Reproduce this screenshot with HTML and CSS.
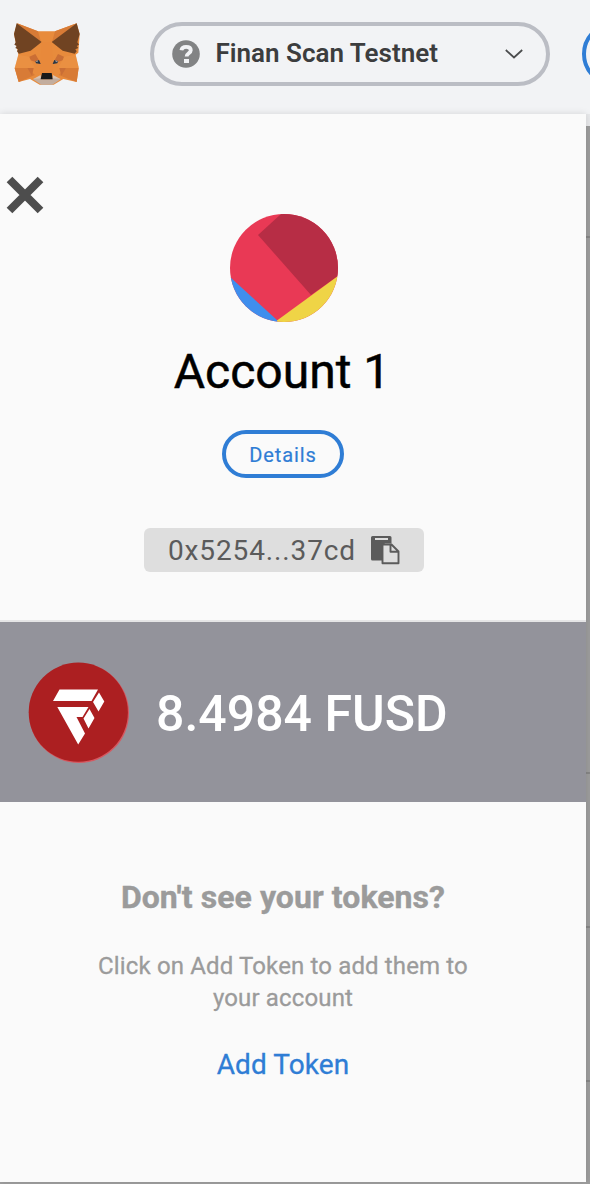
FILE: index.html
```html
<!DOCTYPE html>
<html lang="en">
<head>
<meta charset="utf-8">
<title>Wallet</title>
<link rel="stylesheet" href="styles.css">
</head>
<body>
<header class="topbar">
  <svg class="fox" viewBox="36 36 210 192" aria-label="Wallet logo">
    <path fill="#e88b3c" d="M51 40 114 64H165L230 40 239 73 235 128 227 134 236 172 230 216 190 207 161 224H119L90 207 56 216 44 175 55 134 42 73Z"/>
    <path fill="#d87b36" d="M51 40 114 64 123 96ZM230 40 165 64 156 96ZM44 174 82 174 105 195 56 216ZM236 174 198 174 176 195 230 216Z"/>
    <path fill="#704322" d="M50 40 125 96 92 122 57 131 51 124 54 118 46 114 50 108 43 104 47 97 42 72ZM230 40 155 96 188 122 224 131 230 124 226 118 235 114 230 108 237 104 232 97 239 72Z"/>
    <path fill="#ca6e35" d="M88 140 106 132 124 163 92 151ZM192 140 174 132 157 163 188 151ZM82 174 101 174 96 197ZM198 174 178 174 184 197Z"/>
    <path fill="#ed9b4d" d="M44 174 55 134 87 140 105 174ZM236 174 227 134 193 140 175 174Z" opacity=".35"/>
    <path fill="#e8893b" d="M125 96H155L159 163 157 193H123L121 163Z"/>
    <path fill="#c3ad9e" d="M98 207 123 202 126 208H155L158 202 183 207 157 224H124Z"/>
    <path fill="#d8c4b5" d="M100 207 122 195 123 205ZM181 207 159 195 158 205Z"/>
    <path fill="#263646" d="M106 154 117 150 122 162 108 160ZM174 154 163 150 158 162 172 160Z"/>
    <path fill="#a8a09b" d="M106 154 115 151 112 157ZM174 154 165 151 168 157Z"/>
    <path fill="#18191a" d="M126 189H155L158 208H122Z"/>
  </svg>
  <div class="network">
    <svg class="network-help" viewBox="0 0 28 28"><circle cx="14" cy="14" r="13.8" fill="#828384"/><path d="M9.4 10.2C9.8 7.8 11.4 6.800 14.1 6.800c2.800 0 4.700 1.300 4.700 3.500 0 3-4.200 3-4.200 6.200" fill="none" stroke="#f2f3f5" stroke-width="3.800"/><path d="M12 19h5v4h-5z" fill="#f2f3f5"/></svg>
    <span class="network-name">Finan Scan Testnet</span>
    <svg class="network-arrow" viewBox="0 0 18 10"><path d="M.8 1 9 8.500 17.200 1" fill="none" stroke="#4b4c4d" stroke-width="1.700"/></svg>
  </div>
  <div class="avatar-ring"></div>
</header>
<main class="stage">
  <section class="drawer">
    <div class="account">
      <svg class="close" viewBox="0 0 38 38"><path d="M3.500 3.500 34.500 34.500M34.500 3.500 3.500 34.500" stroke="#4d4d4d" stroke-width="8"/></svg>
      <svg class="identicon" viewBox="0 0 108 108">
        <clipPath id="disc"><circle cx="54" cy="54" r="54"/></clipPath>
        <g clip-path="url(#disc)"><path fill="#e93955" d="M0 0H108V108H0Z"/><path fill="#b72d45" d="M28 21 51 0H108V62L81 81Z"/><path fill="#3f8eed" d="M0 63 47.500 106.500 50 110H0Z"/><path fill="#efd446" d="M47 106.500 108 62V110H47Z"/></g>
      </svg>
      <h1 class="account-name">Account 1</h1>
      <div class="details">Details</div>
      <div class="address">
        <span class="address-text">0x5254...37cd</span>
        <svg class="copy" viewBox="0 0 29 29"><path fill="#5b5b5b" d="M1.500 0H19q1.500 0 1.500 1.500V7.500H14L11 10V24.500H1.500Q0 24.500 0 23V1.500Q0 0 1.500 0Z"/><path fill="#dedede" d="M4 2H17V4H4Z"/><path d="M11.500 8.500H20.500L27.500 15.500V27.200H11.500ZM19.500 8.500V15.700H27.500" fill="#dedede" stroke="#5b5b5b" stroke-width="1.900" stroke-linejoin="round"/></svg>
      </div>
    </div>
    <div class="balance">
      <svg class="token" viewBox="0 0 102 102"><circle cx="51" cy="51" r="50" fill="#d65860"/><circle cx="50.300" cy="50.200" r="49.600" fill="#ac1f21"/><path fill="#fff" d="M31.500 27.500H70L63.500 39H25ZM71 30.500 76.300 39.500 70.500 49.500 65 40ZM29.300 45H60.500L54.500 55H48.500L57 71.500 50.200 82.500ZM61.500 47 66.500 56 60.500 66.500 55.500 56.500Z"/></svg>
      <span class="balance-text">8.4984 FUSD</span>
    </div>
    <div class="prompt">
      <h2 class="prompt-title">Don't see your tokens?</h2>
      <p class="prompt-text">Click on Add Token to add them to<br>your account</p>
      <div class="add-token">Add Token</div>
    </div>
  </section>
  <aside class="backdrop">
    <div class="row row-first"></div>
    <div class="row row-tall"></div>
    <div class="row row-mid"></div>
    <div class="row row-next"></div>
  </aside>
</main>
</body>
</html>
```
FILE: styles.css
```css
* { box-sizing: border-box; }
body { margin: 0; width: 590px; height: 1184px; overflow: hidden; font-family: Roboto, sans-serif; background: #a0a0a0; }
svg { display: block; flex: none; }
.topbar { height: 114px; display: flex; align-items: flex-start; overflow: hidden; background: #f2f3f5; }
.fox { width: 70px; height: 64px; margin: 22px 0 0 12px; }
.network { width: 400px; height: 64px; flex: none; margin: 22px 0 0 68px; padding: 0 23px 0 18px; display: flex; align-items: center; border: 4px solid #bbbdc4; border-radius: 32px; }
.network-help { width: 28px; height: 28px; }
.network-name { margin-left: 15.5px; width: 240px; padding-bottom: 2px; font-size: 26px; line-height: 30px; font-weight: 600; color: #3c3d3e; white-space: nowrap; }
.network-arrow { width: 18px; height: 10px; margin-left: auto; }
.avatar-ring { width: 64px; height: 64px; flex: none; margin: 22px 0 0 32px; border: 4px solid #2f7dd5; border-radius: 50%; }
.stage { display: flex; height: 1070px; }
.drawer { width: 586px; height: 1068px; flex: none; background: #fafafa; box-shadow: 0 0 7px rgba(0,0,0,.13); position: relative; }
.account { height: 508px; padding-right: 16px; display: flex; flex-direction: column; align-items: center; border-bottom: 2px solid #e5e5e6; }
.close { width: 38px; height: 38px; align-self: flex-start; margin: 62px 0 0 6px; }
.identicon { width: 108px; height: 108px; margin: 0 2px 0 0; }
.account-name { margin: 20px 6px 0 0; font-size: 48px; line-height: 60px; font-weight: 400; color: #000; white-space: nowrap; -webkit-text-stroke: .5px #000; }
.details { width: 122px; height: 48px; margin: 28px 4px 0 0; padding-top: 1px; border: 4px solid #2f7dd5; border-radius: 24px; color: #2f7dd5; font-size: 20px; line-height: 40px; letter-spacing: .9px; text-align: center; -webkit-text-stroke: .2px #2f7dd5; }
.address { width: 280px; height: 44px; margin: 50px 2px 0 0; padding: 0 24px; display: flex; align-items: center; justify-content: space-between; background: #dedede; border-radius: 6px; }
.address-text { padding-top: 1px; font-size: 28px; line-height: 43px; letter-spacing: .87px; color: #5b5b5b; white-space: nowrap; }
.copy { width: 29px; height: 29px; }
.balance { height: 180px; padding-left: 27.5px; display: flex; align-items: center; background: #93939b; color: #fff; }
.token { width: 102px; height: 102px; margin-top: 1px; }
.balance-text { margin-left: 26.5px; padding-top: 3px; font-size: 50px; line-height: 60px; font-weight: 500; white-space: nowrap; }
.prompt { padding: 75px 20px 0 0; text-align: center; color: #9b9b9b; }
.prompt-title { margin: 0; font-size: 32px; line-height: 40px; font-weight: 700; letter-spacing: .07px; white-space: nowrap; -webkit-text-stroke: .4px #9b9b9b; }
.prompt-text { margin: 33px 0 0; font-size: 24px; line-height: 32px; letter-spacing: .14px; white-space: nowrap; -webkit-text-stroke: .3px #9b9b9b; }
.add-token { margin-top: 34px; font-size: 28px; line-height: 34px; letter-spacing: .1px; color: #2f7dd5; -webkit-text-stroke: .3px #2f7dd5; }
.backdrop { width: 4px; height: 1070px; padding-top: 12px; background: linear-gradient(#e8e9eb 12px, #9d9d9d 12px); }
.row { border-bottom: 2px solid #868686; }
.row-first { height: 112px; }
.row-tall { height: 536px; }
.row-mid { height: 154px; }
.row-next { height: 154px; }
```
